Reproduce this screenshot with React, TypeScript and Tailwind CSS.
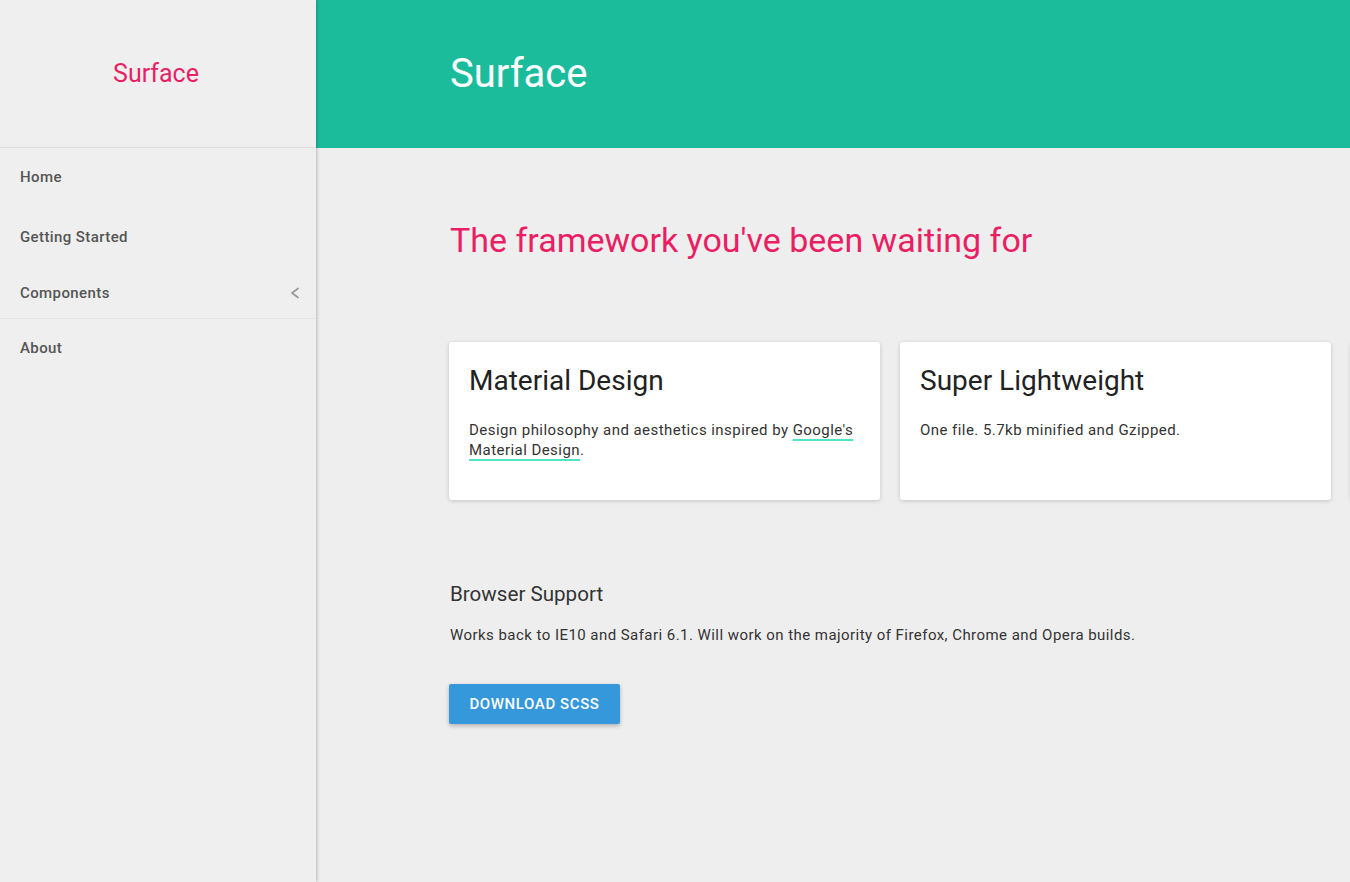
const navItems = [
  { label: 'Home', height: 'h-[58px]' },
  { label: 'Getting Started', height: 'h-[62px]' },
  { label: 'Components', height: 'h-[51px]', sub: true },
  { label: 'About', height: 'h-[58px]' },
];

const cards = [
  {
    title: 'Material Design',
    body: (
      <>
        Design philosophy and aesthetics inspired by{' '}
        <a className="text-[#333] underline decoration-[#4ee6c6] decoration-2 underline-offset-[4px]">
          Google's Material Design
        </a>
        .
      </>
    ),
  },
  { title: 'Super Lightweight', body: <>One file. 5.7kb minified and Gzipped.</> },
];

function ChevronLeft() {
  return (
    <svg width="10" height="12" viewBox="0 0 10 12" fill="none">
      <polyline points="8,1.5 2,6 8,10.5" stroke="#9a9a9a" strokeWidth="1.7" strokeLinecap="round" strokeLinejoin="round" />
    </svg>
  );
}

export default function App() {
  return (
    <div className="flex h-[882px] w-[1350px] overflow-hidden bg-[#eeeeee] font-['Roboto',sans-serif] text-[#333]">
      {/* Sidebar */}
      <aside className="relative z-10 flex w-[316px] shrink-0 flex-col bg-[#efefef] shadow-[1px_0_3px_rgba(0,0,0,0.22)]">
        <div className="flex h-[148px] items-center justify-center border-b border-[#dcdcdc] pr-[4px]">
          <span className="text-[25px] text-[#e91e63]">Surface</span>
        </div>
        <nav className="flex flex-col">
          {navItems.map((item) => (
            <div
              key={item.label}
              className={`flex items-center justify-between pl-5 pr-[16px] ${item.height} ${item.sub ? 'border-b border-[#e6e6e6]' : ''}`}
            >
              <span className="text-[15px] font-medium tracking-[0.4px] text-[#555]">{item.label}</span>
              {item.sub && <ChevronLeft />}
            </div>
          ))}
        </nav>
      </aside>

      {/* Main */}
      <main className="flex min-w-0 flex-1 flex-col">
        <header className="flex h-[148px] shrink-0 items-center bg-[#1abc9c] pl-[134px]">
          <h1 className="text-[40px] leading-none text-white">Surface</h1>
        </header>

        <div className="flex flex-col pl-[133px]">
          <h2 className="mt-[72px] pl-[1px] text-[34px] leading-[40px] text-[#e91e63]">
            The framework you've been waiting for
          </h2>

          <div className="mt-[82px] flex gap-5">
            {cards.map((card) => (
              <div
                key={card.title}
                className="h-[158px] w-[431px] shrink-0 rounded-[3px] bg-white p-5 shadow-[0_1px_4px_rgba(0,0,0,0.18)]"
              >
                <h3 className="text-[28px] leading-[38px] text-[#222]">{card.title}</h3>
                <p className="mt-[20px] text-[15px] leading-[20px] tracking-[0.45px] text-[#333]">{card.body}</p>
              </div>
            ))}
            <div className="h-[158px] w-[431px] shrink-0 rounded-[3px] bg-white shadow-[0_1px_4px_rgba(0,0,0,0.18)]" />
          </div>

          <h4 className="mt-[82px] pl-[1px] text-[20.6px] leading-[24px] text-[#333]">Browser Support</h4>
          <p className="mt-[19px] pl-[1px] text-[15px] leading-[20px] tracking-[0.45px] text-[#333]">
            Works back to IE10 and Safari 6.1. Will work on the majority of Firefox, Chrome and Opera builds.
          </p>

          <div className="mt-[39px]">
            <button className="h-[40px] w-[171px] rounded-[2px] bg-[#3498db] text-[15px] font-medium uppercase tracking-[0.6px] text-white shadow-[0_2px_4px_rgba(0,0,0,0.25)]">
              Download SCSS
            </button>
          </div>
        </div>
      </main>
    </div>
  );
}
